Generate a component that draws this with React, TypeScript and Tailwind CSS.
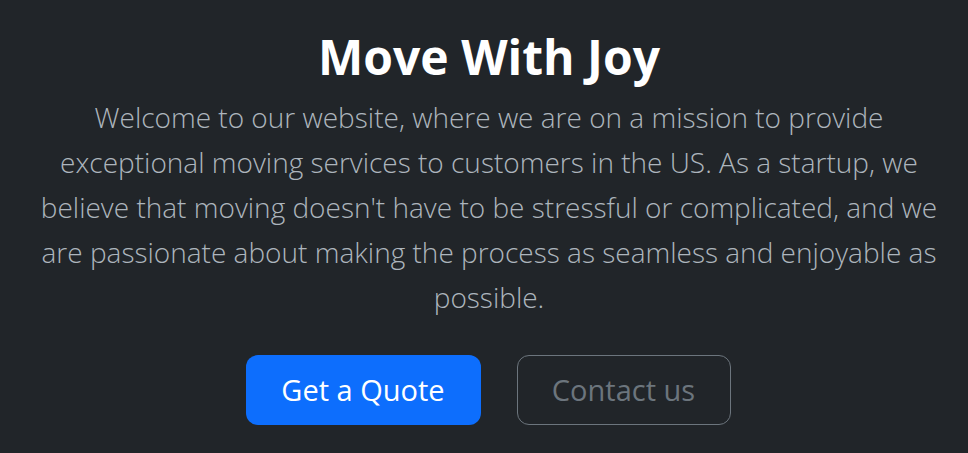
const App = () => {
    return (
        <div className="min-h-[453px] bg-[#212529] font-['Open_Sans',sans-serif]">
            <section className="pl-[38px] pr-[28px] pt-[27px] text-center">
                <h1 className="text-[48px] leading-[60px] font-bold text-white">Move With Joy</h1>
                <div className="mx-auto mt-[8px] max-w-[904px]">
                    <p className="text-[28px] leading-[45px] font-light text-[#adb5bd]">
                        Welcome to our website, where we are on a mission to provide exceptional moving services to customers in the US. As a startup, we believe that moving doesn't have to be stressful or complicated, and we are passionate about making the process as seamless and enjoyable as possible.
                    </p>
                    <div className="mt-[35px] mr-[2px] flex justify-center gap-[36px]">
                        <button className="h-[70px] w-[235px] rounded-[12px] bg-[#0d6efd] text-[29px] text-white">Get a Quote</button>
                        <button className="h-[70px] w-[214px] rounded-[12px] border border-[#6c757d] text-[29px] text-[#6c757d]">Contact us</button>
                    </div>
                </div>
            </section>
        </div>
    );
};

export default App;
